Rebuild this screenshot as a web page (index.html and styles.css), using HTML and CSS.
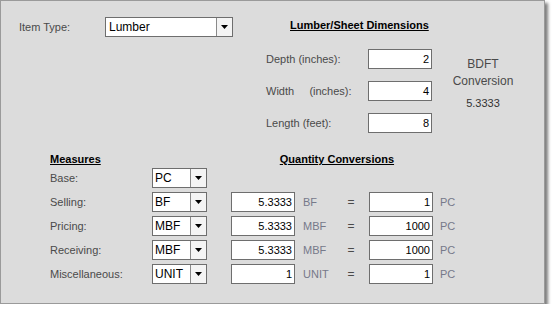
FILE: index.html
```html
<!DOCTYPE html>
<html lang="en">
  <head>
    <meta charset="UTF-8">
    <title>Item Measures</title>
    <link rel="stylesheet" href="styles.css">
  </head>
  <body>
    <div class="panel">
      <div class="top">
        <div class="item-type">
          <span class="label">Item Type:</span>
          <div class="combo combo-wide">
            <span class="combo-text">Lumber</span>
            <span class="combo-btn"><svg width="7" height="4" viewBox="0 0 7 4"><path d="M0 0H7L3.5 4Z" fill="#000"/></svg></span>
          </div>
        </div>
        <div class="dims">
          <h3 class="heading dims-heading">Lumber/Sheet Dimensions</h3>
          <div class="dims-body">
            <div class="dims-rows">
              <div class="dim-row"><span class="dim-label">Depth (inches):</span><div class="field">2</div></div>
              <div class="dim-row"><span class="dim-label">Width     (inches):</span><div class="field">4</div></div>
              <div class="dim-row"><span class="dim-label">Length (feet):</span><div class="field">8</div></div>
            </div>
            <div class="bdft">
              <div>BDFT</div>
              <div>Conversion</div>
              <div class="bdft-value">5.3333</div>
            </div>
          </div>
        </div>
      </div>

      <div class="measures">
        <div class="measure-heads">
          <h3 class="heading">Measures</h3>
          <h3 class="heading qty-heading">Quantity Conversions</h3>
        </div>
        <div class="measure-grid">
          <span class="label">Base:</span>
          <div class="combo"><span class="combo-text">PC</span><span class="combo-btn"><svg width="7" height="4" viewBox="0 0 7 4"><path d="M0 0H7L3.5 4Z" fill="#000"/></svg></span></div>
          <span></span><span></span><span></span><span></span><span></span>

          <span class="label">Selling:</span>
          <div class="combo"><span class="combo-text">BF</span><span class="combo-btn"><svg width="7" height="4" viewBox="0 0 7 4"><path d="M0 0H7L3.5 4Z" fill="#000"/></svg></span></div>
          <div class="field">5.3333</div>
          <span class="unit">BF</span>
          <span class="equals">=</span>
          <div class="field field-right">1</div>
          <span class="unit unit-pc">PC</span>

          <span class="label">Pricing:</span>
          <div class="combo"><span class="combo-text">MBF</span><span class="combo-btn"><svg width="7" height="4" viewBox="0 0 7 4"><path d="M0 0H7L3.5 4Z" fill="#000"/></svg></span></div>
          <div class="field">5.3333</div>
          <span class="unit">MBF</span>
          <span class="equals">=</span>
          <div class="field field-right">1000</div>
          <span class="unit unit-pc">PC</span>

          <span class="label">Receiving:</span>
          <div class="combo"><span class="combo-text">MBF</span><span class="combo-btn"><svg width="7" height="4" viewBox="0 0 7 4"><path d="M0 0H7L3.5 4Z" fill="#000"/></svg></span></div>
          <div class="field">5.3333</div>
          <span class="unit">MBF</span>
          <span class="equals">=</span>
          <div class="field field-right">1000</div>
          <span class="unit unit-pc">PC</span>

          <span class="label">Miscellaneous:</span>
          <div class="combo"><span class="combo-text">UNIT</span><span class="combo-btn"><svg width="7" height="4" viewBox="0 0 7 4"><path d="M0 0H7L3.5 4Z" fill="#000"/></svg></span></div>
          <div class="field">1</div>
          <span class="unit">UNIT</span>
          <span class="equals">=</span>
          <div class="field field-right">1</div>
          <span class="unit unit-pc">PC</span>
        </div>
      </div>
    </div>
  </body>
</html>
```
FILE: styles.css
```css
body {
    margin: 0;
    background-color: #fff;
    font-family: "Liberation Sans", Arial, sans-serif;
    font-size: 11px;
    line-height: 14px;
    color: #4a4a4a;
  }

  .panel {
    box-sizing: border-box;
    width: 545px;
    height: 304px;
    background-color: #dcdcdc;
    border: 1px solid #9a9a9a;
    box-shadow: 3px 3px 3px rgba(0, 0, 0, 0.5);
  }

  .top {
    display: flex;
    padding: 16px 0 0 18px;
  }

  .item-type {
    display: flex;
    align-items: center;
    height: 20px;
  }

  .item-type .label {
    width: 86px;
  }

  .heading {
    margin: 0;
    font-size: 11px;
    font-weight: bold;
    color: #000;
    text-decoration: underline;
    white-space: pre;
  }

  .dims {
    margin-left: 33px;
    padding-top: 1px;
  }

  .dims-heading {
    margin-left: 24px;
  }

  .dims-body {
    display: flex;
    margin-top: 17px;
  }

  .dims-rows {
    display: flex;
    flex-direction: column;
    gap: 12px;
  }

  .dim-row {
    display: flex;
    align-items: center;
  }

  .dim-label {
    width: 102px;
    white-space: pre;
  }

  .field {
    box-sizing: border-box;
    width: 64px;
    height: 20px;
    padding: 2px 2px 0 0;
    background-color: #fff;
    border: 1px solid #6e6e6e;
    color: #000;
    text-align: right;
  }

  .bdft {
    width: 102px;
    padding-top: 7px;
    text-align: center;
    line-height: 17px;
    font-size: 12px;
  }

  .bdft-value {
    margin-top: 5px;
    color: #333;
    font-size: 11px;
  }

  .combo {
    box-sizing: border-box;
    display: flex;
    width: 55px;
    height: 20px;
    background-color: #fff;
    border: 1px solid #6e6e6e;
    color: #000;
  }

  .combo-wide {
    width: 128px;
  }

  .combo-text {
    flex: 1;
    padding: 2px 0 0 2px;
    font-size: 12px;
  }

  .combo-wide .combo-text {
    padding-left: 3px;
  }

  .combo-btn {
    display: flex;
    align-items: center;
    justify-content: center;
    width: 15px;
    border-left: 1px solid #8a8a8a;
    background-color: #f4f4f4;
  }

  .measures {
    margin-top: 19px;
    padding-left: 49px;
  }

  .measure-heads {
    display: flex;
  }

  .qty-heading {
    margin-left: 179px;
  }

  .measure-grid {
    display: grid;
    grid-template-columns: 102px 79px 72px 40px 16px 74px auto;
    grid-auto-rows: 20px;
    row-gap: 4px;
    align-items: center;
    margin-top: 2px;
  }

  .unit {
    color: #76798a;
  }

  .equals {
    text-align: center;
    font-size: 12px;
  }

  .field-right {
    justify-self: end;
  }

  .unit-pc {
    padding-left: 7px;
  }
```
